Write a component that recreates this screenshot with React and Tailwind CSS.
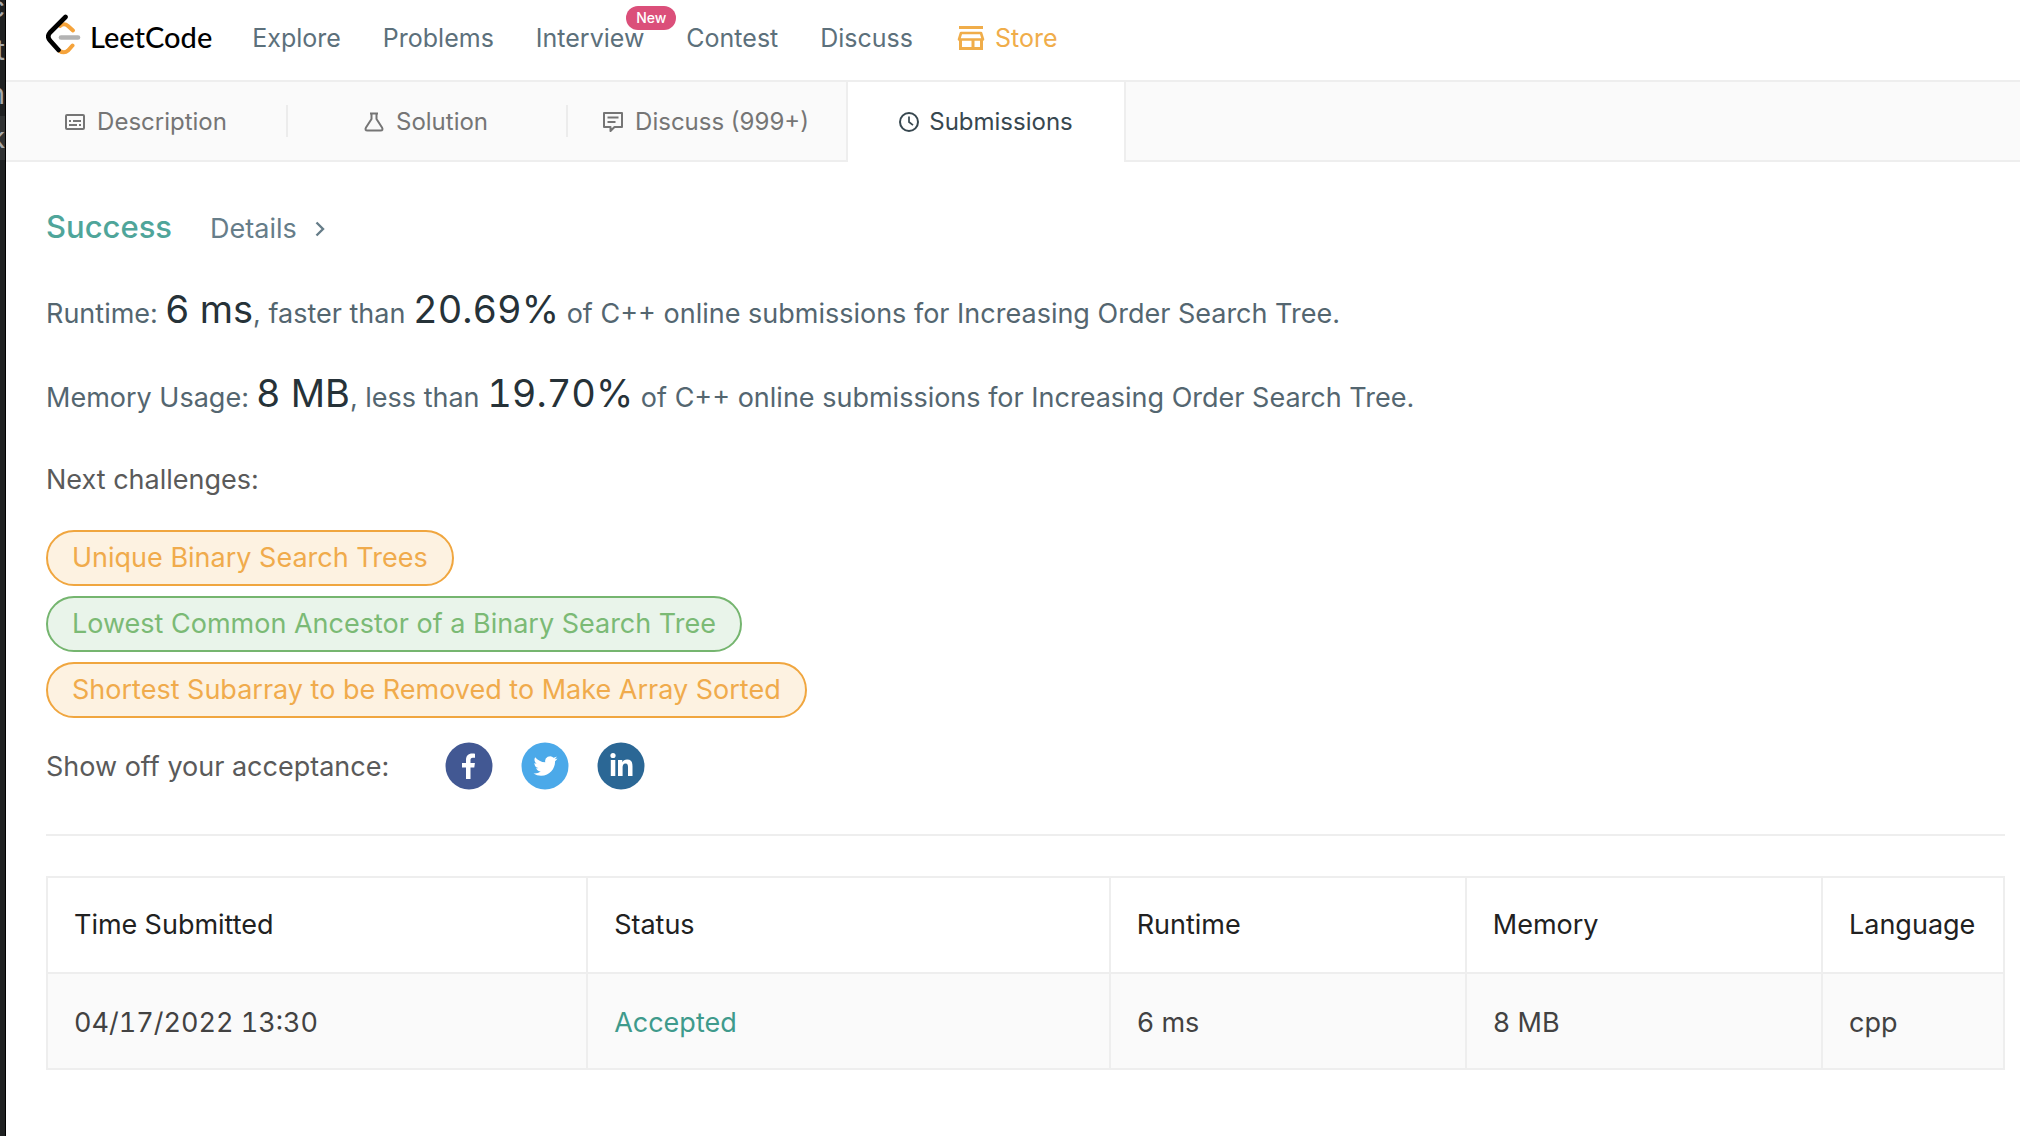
import React from "react";

const navLinks = ["Explore", "Problems", "Interview", "Contest", "Discuss"];

const challenges = [
  { name: "Unique Binary Search Trees", tone: "border-[#f0a63f] bg-[#fdf2e1] text-[#f0ab4c]" },
  { name: "Lowest Common Ancestor of a Binary Search Tree", tone: "border-[#75b56f] bg-[#e9f4ea] text-[#7bba75]" },
  { name: "Shortest Subarray to be Removed to Make Array Sorted", tone: "border-[#f0a63f] bg-[#fdf2e1] text-[#f0ab4c]" },
];

function LogoMark() {
  return (
    <svg viewBox="0 0 36 42" className="h-[42px] w-9" fill="none" strokeLinecap="round" aria-hidden="true">
      <path d="M14 12q4-3.500 8 0l5 4.500" stroke="#f5a33b" strokeWidth="4" />
      <path d="M13 36.500q5 3.500 9 0l4.500-5" stroke="#f5a33b" strokeWidth="4" />
      <path d="M15 23.500h17" stroke="#b3b3b3" strokeWidth="4.600" />
      <path d="M19.500 3L4 18.500q-3.500 4 0 8L12.500 36" stroke="#000" strokeWidth="4.600" strokeLinejoin="round" />
    </svg>
  );
}

function DescriptionIcon() {
  return (
    <svg viewBox="0 0 20 20" className="size-5" fill="none" stroke="currentColor" strokeWidth="2" aria-hidden="true">
      <rect x="1" y="3" width="18" height="14" rx="1" />
      <path d="M4 9h2M8 9h8M4 13h8M14 13h2" />
    </svg>
  );
}

function FlaskIcon() {
  return (
    <svg viewBox="0 0 20 20" className="size-5" fill="none" stroke="currentColor" strokeWidth="2" strokeLinejoin="round" aria-hidden="true">
      <path d="M6 1.500h8M7.500 2v5L2 15.500q-1.500 3 1.500 3h13q3 0 1.500-3L12.500 7V2" />
    </svg>
  );
}

function CommentIcon() {
  return (
    <svg viewBox="0 0 20 20" className="size-5" fill="none" stroke="currentColor" strokeWidth="2" strokeLinejoin="round" aria-hidden="true">
      <path d="M1 1h18v14h-7.500l-4 4v-4H1zM4.500 5.500h11M4.500 10h8" />
    </svg>
  );
}

function ClockIcon() {
  return (
    <svg viewBox="0 0 20 20" className="size-5" fill="none" stroke="currentColor" aria-hidden="true">
      <circle cx="10" cy="10" r="9" strokeWidth="2" />
      <path d="M10 4.500V10l4 3.200" strokeWidth="1.700" />
    </svg>
  );
}

function StoreIcon() {
  return (
    <svg viewBox="0 0 28 24" className="h-6 w-7" fill="none" stroke="currentColor" aria-hidden="true">
      <path d="M2 1.500h24" strokeWidth="3" />
      <path d="M4 7h20l2 6.500H2z" strokeWidth="2.600" strokeLinejoin="round" />
      <path d="M3.500 13.500v9h21v-9M16 13.500v9" strokeWidth="3" />
    </svg>
  );
}

function ShareIcon({ kind }) {
  return (
    <svg viewBox="0 0 48 48" className="size-12" aria-hidden="true">
      {kind === "Facebook" && (
        <>
          <circle cx="24" cy="24" r="23.500" fill="#425893" />
          <path d="M21 37V25.500h-4V21h4v-3.200c0-4 2.300-6.300 6.200-6.300 1.200 0 2.200.1 2.800.2v4h-2.100c-2 0-2.400 1-2.400 2.400V21h4.400l-.6 4.500h-3.800V37z" fill="#fff" />
        </>
      )}
      {kind === "Twitter" && (
        <>
          <circle cx="24" cy="24" r="23.500" fill="#4ba9e9" />
          <path transform="translate(12.500 12)" d="M23.950 4.570a10 10 0 0 1-2.820.775 4.960 4.960 0 0 0 2.160-2.723c-.950.555-2.005.959-3.127 1.184a4.920 4.920 0 0 0-8.384 4.482C7.690 8.095 4.067 6.130 1.640 3.162a4.820 4.820 0 0 0-.666 2.475c0 1.710.87 3.213 2.188 4.096a4.900 4.900 0 0 1-2.228-.616v.06a4.920 4.920 0 0 0 3.946 4.827 5 5 0 0 1-2.212.085 4.940 4.940 0 0 0 4.604 3.417 9.870 9.870 0 0 1-6.102 2.105c-.39 0-.779-.023-1.170-.067a13.990 13.990 0 0 0 7.557 2.209c9.053 0 13.998-7.496 13.998-13.985 0-.21 0-.42-.015-.63a9.940 9.940 0 0 0 2.460-2.548z" fill="#fff" />
        </>
      )}
      {kind === "LinkedIn" && (
        <>
          <circle cx="24" cy="24" r="23.500" fill="#2b6795" />
          <circle cx="16" cy="13.500" r="2.600" fill="#fff" />
          <path d="M13.800 18h4.500v16h-4.500zM21 18h4.300v2.200c.8-1.500 2.500-2.600 4.800-2.600 4.400 0 5.400 2.900 5.400 6.800V34H31v-8.600c0-2.100-.2-4-2.500-4s-2.900 1.800-2.900 3.900V34H21z" fill="#fff" />
        </>
      )}
    </svg>
  );
}

function Tab({ icon, label, divider }) {
  return (
    <div className="flex h-20 w-[280px] items-center border-b-2 border-[#eeeeee]">
      <button type="button" className="flex flex-1 items-center justify-center gap-3 pt-0.5">
        {icon}
        {label}
      </button>
      {divider && <span className="-mr-0.5 h-8 w-0.5 bg-[#ececec]" />}
    </div>
  );
}

function Stat({ label, value, joiner, percent }) {
  return (
    <p className="text-[27px] leading-[84px] text-[#546670]">
      {label} <span className="text-[38px] leading-none text-[#263238]">{value}</span>, {joiner}{" "}
      <span className="text-[38px] leading-none tabular-nums text-[#263238]">{percent}</span> of C++ online submissions
      for Increasing Order Search Tree.
    </p>
  );
}

export default function App() {
  const th = "border-2 border-[#eeeeee] px-[26px] text-left font-normal text-[#212121]";
  const td = "border-2 border-[#eeeeee] px-[26px] pt-1";
  return (
    <div className="flex min-h-screen bg-white font-['Inter',sans-serif]">
      <aside className="w-1.5 shrink-0 overflow-hidden border-r border-black bg-[#1f2122] pt-0.5 text-[28px] text-[#a9aaab]" aria-hidden="true">
        <div className="flex h-[26px] items-center justify-end pb-4">c</div>
        <div className="flex h-11 items-center justify-end">t</div>
        <div className="flex h-11 items-center justify-end">n</div>
        <div className="flex h-11 items-center justify-end bg-[#303233]">k</div>
      </aside>

      <div className="min-w-0 flex-1">
        <header className="flex h-[82px] items-center border-b-2 border-[#eeeeee] pb-1 pl-10">
          <a href="#home" className="flex items-center gap-2 pb-1.5 font-['Lato',sans-serif] text-[29px] font-medium leading-9 text-black">
            <LogoMark />
            <span className="pt-1">LeetCode</span>
          </a>
          <nav className="ml-10 flex items-center gap-[42px] text-[25px] leading-8 text-[#5c707b]">
            {navLinks.map((name) => (
              <a key={name} href={`#${name.toLowerCase()}`} className="relative">
                {name}
                {name === "Interview" && (
                  <span className="absolute -right-8 -top-4 flex h-6 items-center rounded-full bg-[#db4f7a] px-2.5 text-sm font-medium text-white">
                    New
                  </span>
                )}
              </a>
            ))}
            <a href="#store" className="ml-0.5 flex items-center gap-2.5 text-[#f0ad4a]">
              <StoreIcon />
              Store
            </a>
          </nav>
        </header>

        <div className="flex h-20 bg-[#fafafa] text-2xl text-[#757575]">
          <Tab icon={<DescriptionIcon />} label="Description" divider />
          <Tab icon={<FlaskIcon />} label="Solution" divider />
          <Tab icon={<CommentIcon />} label="Discuss (999+)" />
          <button type="button" className="flex w-[280px] items-center justify-center gap-2.5 border-x-2 border-[#eeeeee] bg-white text-[#37474f]">
            <ClockIcon />
            Submissions
          </button>
          <div className="flex-1 border-b-2 border-[#eeeeee]" />
        </div>

        <main className="pl-10 pr-[15px] pt-10">
          <div className="flex items-baseline gap-[38px] leading-[50px]">
            <h1 className="text-[31px] font-medium text-[#4fa59a]">Success</h1>
            <a href="#details" className="flex items-center gap-[18px] text-[27px] text-[#667d89]">
              Details
              <svg viewBox="0 0 10 16" className="h-4 w-2.5" fill="none" stroke="currentColor" strokeWidth="2.400" aria-hidden="true">
                <path d="M1.500 1.500L8 8l-6.500 6.500" />
              </svg>
            </a>
          </div>

          <div className="pt-[18px]">
            <Stat label="Runtime:" value="6 ms" joiner="faster than" percent="20.69%" />
            <Stat label="Memory Usage:" value="8 MB" joiner="less than" percent="19.70%" />
          </div>

          <h2 className="pt-1.5 text-[27px] leading-[68px] text-[#5a5a5a]">Next challenges:</h2>
          <ul className="flex flex-col items-start gap-2.5 pt-4 text-[27px]">
            {challenges.map(({ name, tone }) => (
              <li key={name}>
                <a href="#challenge" className={`flex h-14 items-center rounded-full border-2 px-6 ${tone}`}>
                  {name}
                </a>
              </li>
            ))}
          </ul>

          <div className="flex items-center pt-6 text-[27px] text-[#5a5a5a]">
            <span className="pt-0.5">Show off your acceptance:</span>
            <div className="ml-14 flex gap-7">
              {["Facebook", "Twitter", "LinkedIn"].map((kind) => (
                <a key={kind} href={`#${kind.toLowerCase()}`} aria-label={kind}>
                  <ShareIcon kind={kind} />
                </a>
              ))}
            </div>
          </div>

          <hr className="mb-10 mt-11 border-t-2 border-[#eeeeee]" />

          <table className="w-full table-fixed border-collapse text-[27px] tabular-nums text-[#424242]">
            <colgroup>
              <col className="w-[27.600%]" />
              <col className="w-[26.700%]" />
              <col className="w-[18.200%]" />
              <col className="w-[18.200%]" />
              <col />
            </colgroup>
            <thead>
              <tr className="h-24">
                <th className={th}>Time Submitted</th>
                <th className={th}>Status</th>
                <th className={th}>Runtime</th>
                <th className={th}>Memory</th>
                <th className={th}>Language</th>
              </tr>
            </thead>
            <tbody>
              <tr className="h-24 bg-[#fafafa]">
                <td className={td}>04/17/2022 13:30</td>
                <td className={td}>
                  <a href="#submission" className="text-[#3f9a8c]">Accepted</a>
                </td>
                <td className={td}>6 ms</td>
                <td className={td}>8 MB</td>
                <td className={td}>cpp</td>
              </tr>
            </tbody>
          </table>
        </main>
      </div>
    </div>
  );
}
